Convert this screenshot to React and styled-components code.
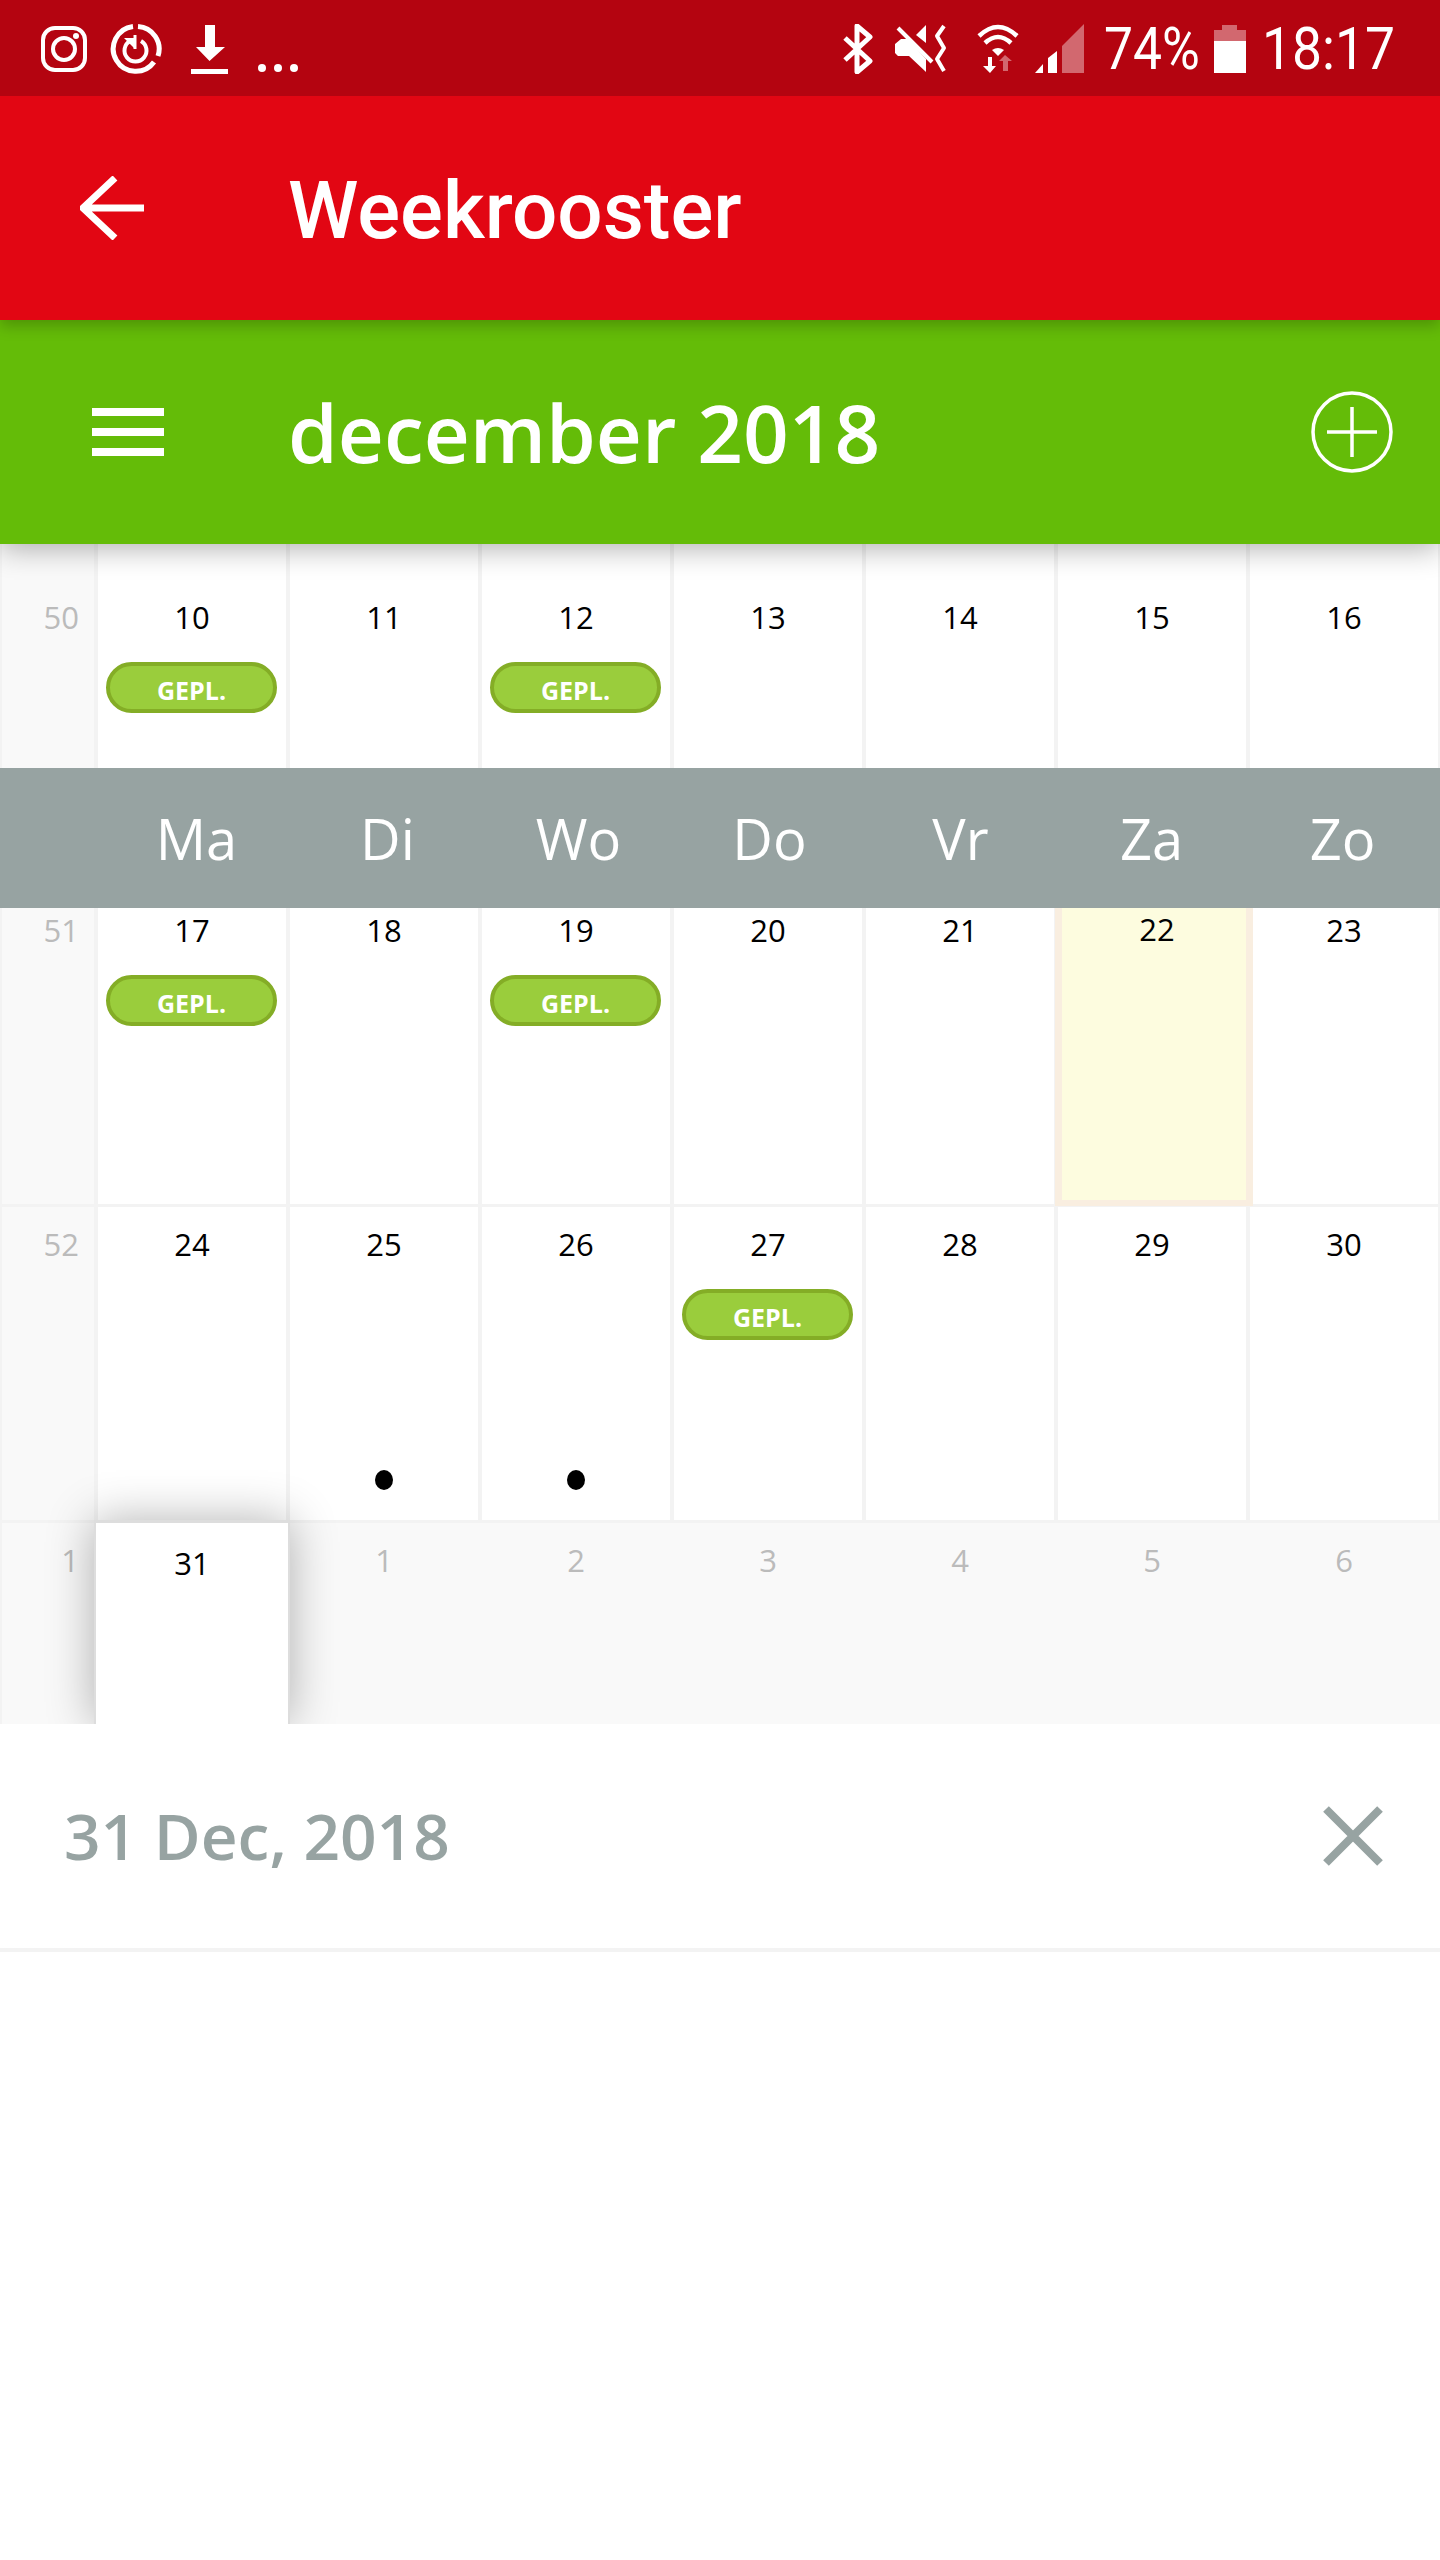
import styled, { createGlobalStyle } from 'styled-components'

const GlobalStyle = createGlobalStyle`
  html, body {
    margin: 0;
    padding: 0;
    background: #fff;
  }
  * {
    box-sizing: border-box;
  }
`

const Page = styled.div`
  width: 1440px;
  height: 2560px;
  overflow: hidden;
  background: #fff;
  font-family: "Open Sans", sans-serif;
`

const StatusBar = styled.div`
  height: 96px;
  background: #b40410;
  display: flex;
  align-items: flex-start;
  padding: 24px 46px 0 0;
  position: relative;
  z-index: 4;
`

const StatusIcon = styled.svg`
  display: block;
  flex: none;
  margin-left: ${(p) => p.$gap}px;
  fill: #fff;
`

const StatusSpacer = styled.div`
  flex: 1;
`

const StatusText = styled.div`
  flex: none;
  width: ${(p) => p.$w}px;
  margin-left: ${(p) => p.$gap}px;
  height: 50px;
  font-family: Roboto, sans-serif;
  font-weight: 400;
  font-size: 60px;
  line-height: 50px;
  color: #fff;
  white-space: nowrap;
  transform: scaleX(${(p) => p.$sx});
  transform-origin: left center;
`

const RedBar = styled.header`
  height: 224px;
  background: #e20613;
  display: flex;
  align-items: center;
  padding-left: 80px;
  position: relative;
  z-index: 3;
  box-shadow: 0 6px 14px rgba(0, 0, 0, 0.22);
`

const RedTitle = styled.h1`
  margin: 6px 0 0 144px;
  font-family: Roboto, sans-serif;
  font-weight: 500;
  font-size: 80px;
  line-height: 1;
  color: #fff;
`

const GreenBar = styled.div`
  height: 224px;
  background: #64bc08;
  display: flex;
  align-items: center;
  padding: 0 47px 0 92px;
  position: relative;
  z-index: 2;
  box-shadow: 0 4px 28px rgba(0, 0, 0, 0.32);
`

const Burger = styled.div`
  width: 72px;
  display: flex;
  flex-direction: column;
  gap: 12px;
`

const BurgerLine = styled.span`
  display: block;
  height: 8px;
  background: #fff;
`

const MonthTitle = styled.h2`
  margin: 0 0 0 124px;
  flex: 1;
  font-weight: 600;
  font-size: 80px;
  line-height: 1;
  color: #fff;
`

const Calendar = styled.div`
  height: 1180px;
  position: relative;
  overflow: hidden;
  background: #fff;
`

const Row = styled.div`
  height: ${(p) => p.$h}px;
  display: grid;
  grid-template-columns: 96px repeat(7, 192px);
`

const Cell = styled.div`
  position: relative;
  display: flex;
  flex-direction: column;
  align-items: center;
  padding: 21px 0 30px;
  background: #fff;
  border-style: solid;
  border-color: #f3f3f3;
  border-width: 0 2px 3px;
  font-size: 31px;
  line-height: 32px;
  color: #000;
`

const WeekCell = styled(Cell)`
  align-items: flex-end;
  padding-right: 15px;
  background: #f9f9f9;
  color: #bbb;
`

const TodayCell = styled(Cell)`
  z-index: 1;
  &::before {
    content: '';
    position: absolute;
    left: -3px;
    right: -7px;
    top: 0;
    bottom: -2px;
    background: #fdfcdf;
    border: solid #f9eee0;
    border-width: 0 7px 6px;
  }
`

const OutsideCell = styled(Cell)`
  border: none;
  background: #f9f9f9;
  color: #bbb;
`

const LastWeekCell = styled(WeekCell)`
  border-width: 0 0 0 2px;
  padding-right: 17px;
`

const SelectedCell = styled(Cell)`
  z-index: 1;
  margin: -3px -2px 0;
  padding-top: 24px;
  border: solid #ddd;
  border-width: 3px 2px 0;
  box-shadow: 0 0 44px rgba(0, 0, 0, 0.3);
`

const DayNumber = styled.span`
  position: relative;
  ${(p) => p.$today && 'transform: translate(5px, -1px);'}
`

const Pill = styled.div`
  width: 171px;
  height: 51px;
  margin-top: 29px;
  margin-left: -1px;
  border: 4px solid #84ad26;
  border-radius: 26px;
  background: #9acd3c;
  color: #fff;
  font-size: 25px;
  font-weight: 700;
  line-height: 49px;
  text-align: center;
`

const Dot = styled.span`
  width: 18px;
  height: 20px;
  margin-top: auto;
  border-radius: 50%;
  background: #000;
`

const DayBand = styled.div`
  position: absolute;
  top: 224px;
  left: 0;
  right: 0;
  height: 140px;
  z-index: 2;
  display: grid;
  grid-template-columns: 101px repeat(7, 191px);
  align-items: center;
  background: #97a3a2;
`

const DayName = styled.div`
  grid-column: ${(p) => p.$col};
  font-size: 56px;
  font-weight: 500;
  line-height: 1;
  color: #fff;
  text-align: center;
`

const SheetHeader = styled.div`
  height: 228px;
  position: relative;
  z-index: 3;
  display: flex;
  align-items: center;
  justify-content: space-between;
  padding: 0 57px 0 64px;
  background: #fff;
  border-bottom: 4px solid #f3f3f3;
`

const SheetTitle = styled.div`
  font-weight: 600;
  font-size: 64px;
  line-height: 1;
  color: #97a3a2;
`

const weeks = [
  { nr: 50, h: 313, days: [10, 11, 12, 13, 14, 15, 16] },
  { nr: 51, h: 314, days: [17, 18, 19, 20, 21, 22, 23] },
  { nr: 52, h: 316, days: [24, 25, 26, 27, 28, 29, 30] },
]
const planned = [10, 12, 17, 19, 27]
const withDot = [25, 26]
const dayNames = ['Ma', 'Di', 'Wo', 'Do', 'Vr', 'Za', 'Zo']

function DayContent({ day }) {
  return (
    <>
      <DayNumber $today={day === 22}>{day}</DayNumber>
      {planned.includes(day) && <Pill>GEPL.</Pill>}
      {withDot.includes(day) && <Dot />}
    </>
  )
}

function App() {
  return (
    <Page>
      <GlobalStyle />
      <StatusBar>
        <StatusIcon $gap={41} width="46" height="50" viewBox="0 0 46 50">
          <rect x="2" y="4" width="42" height="42" rx="12" fill="none" stroke="#fff" strokeWidth="4" />
          <circle cx="23" cy="25" r="11" fill="none" stroke="#fff" strokeWidth="4" />
          <circle cx="35" cy="12" r="3" />
        </StatusIcon>
        <StatusIcon $gap={23} width="52" height="50" viewBox="0 0 52 50">
          <path d="M23 2.5A22.5 22.5 0 1 0 44 38" fill="none" stroke="#fff" strokeWidth="5" />
          <path d="M28 2.5A22.5 22.5 0 0 1 48 32" fill="none" stroke="#fff" strokeWidth="5" />
          <path d="M20 17A11 11 0 1 0 31 17" fill="none" stroke="#fff" strokeWidth="4" />
          <path d="M14 14L24 14L24 24Z" />
          <path d="M25 11V25" stroke="#fff" strokeWidth="3" />
        </StatusIcon>
        <StatusIcon $gap={29} width="37" height="50" viewBox="0 0 37 50">
          <path d="M14 1H24V23H34L18.500 37L5 23H14Z" />
          <rect x="0" y="45" width="37" height="5" />
        </StatusIcon>
        <StatusIcon $gap={30} width="40" height="50" viewBox="0 0 40 50">
          <circle cx="4" cy="44" r="4" />
          <circle cx="20" cy="44" r="4" />
          <circle cx="36" cy="44" r="4" />
        </StatusIcon>
        <StatusSpacer />
        <StatusIcon width="32" height="50" viewBox="0 0 32 50">
          <path d="M3 14L28 37L15 48V2L28 13L3 36" fill="none" stroke="#fff" strokeWidth="5" strokeLinejoin="round" />
        </StatusIcon>
        <StatusIcon $gap={21} width="52" height="50" viewBox="0 0 52 50">
          <path d="M0 20L6 15H13L31 35V48L14 32H3L0 29Z" />
          <path d="M21 11L31 1V19Z" />
          <path d="M3 4L37 38" stroke="#fff" strokeWidth="4" />
          <path d="M49 2L42 12L49 24L42 35L49 47" fill="none" stroke="#fff" strokeWidth="4" strokeLinejoin="round" />
        </StatusIcon>
        <StatusIcon $gap={30} width="42" height="50" viewBox="0 0 42 50">
          <path d="M2 12Q21 -6 40 12" fill="none" stroke="#fff" strokeWidth="4.500" />
          <path d="M8 19Q21 7 34 19" fill="none" stroke="#fff" strokeWidth="4.500" />
          <path d="M15 26Q21 22 27 26L21 32Z" />
          <path d="M11 33H15V42H19L13 49L6 42H11Z" />
          <path d="M28 31L35 37H31V47H26V37H22Z" fillOpacity="0.4" />
        </StatusIcon>
        <StatusIcon $gap={16} width="49" height="50" viewBox="0 0 49 50">
          <path d="M0 49L8 40V49Z" />
          <path d="M13 49V34L22 27V49Z" />
          <path d="M27 49V22L49 0V49Z" fillOpacity="0.4" />
        </StatusIcon>
        <StatusText $gap={20} $w={96} $sx={0.86}>74%</StatusText>
        <StatusIcon $gap={14} width="32" height="50" viewBox="0 0 32 50">
          <path d="M8 1H23V6H32V17H0V6H8Z" fillOpacity="0.4" />
          <rect x="0" y="17" width="32" height="32" />
        </StatusIcon>
        <StatusText $gap={16} $w={132} $sx={0.89}>18:17</StatusText>
      </StatusBar>

      <RedBar>
        <svg width="64" height="64" viewBox="0 0 64 64">
          <path d="M35 2L3 32L35 62M3 32H64" fill="none" stroke="#fff" strokeWidth="7" />
        </svg>
        <RedTitle>Weekrooster</RedTitle>
      </RedBar>

      <GreenBar>
        <Burger>
          <BurgerLine />
          <BurgerLine />
          <BurgerLine />
        </Burger>
        <MonthTitle>december 2018</MonthTitle>
        <svg width="82" height="82" viewBox="0 0 82 82">
          <circle cx="41" cy="41" r="39" fill="none" stroke="#fff" strokeWidth="3.500" />
          <path d="M41 16V66M16 41H66" stroke="#fff" strokeWidth="3.500" />
        </svg>
      </GreenBar>

      <Calendar>
        <Row $h={36}>
          <WeekCell />
          {dayNames.map((name) => (
            <Cell key={name} />
          ))}
        </Row>
        {weeks.map((week) => (
          <Row key={week.nr} $h={week.h}>
            <WeekCell>{week.nr}</WeekCell>
            {week.days.map((day) =>
              day === 22 ? (
                <TodayCell key={day}>
                  <DayContent day={day} />
                </TodayCell>
              ) : (
                <Cell key={day}>
                  <DayContent day={day} />
                </Cell>
              )
            )}
          </Row>
        ))}
        <Row $h={201}>
          <LastWeekCell>1</LastWeekCell>
          <SelectedCell>31</SelectedCell>
          {[1, 2, 3, 4, 5, 6].map((day) => (
            <OutsideCell key={day}>{day}</OutsideCell>
          ))}
        </Row>
        <DayBand>
          {dayNames.map((name, i) => (
            <DayName key={name} $col={i + 2}>{name}</DayName>
          ))}
        </DayBand>
      </Calendar>

      <SheetHeader>
        <SheetTitle>31 Dec, 2018</SheetTitle>
        <svg width="60" height="60" viewBox="0 0 60 60">
          <path d="M3 3L57 57M57 3L3 57" stroke="#97a3a2" strokeWidth="8" />
        </svg>
      </SheetHeader>
    </Page>
  )
}

export default App
